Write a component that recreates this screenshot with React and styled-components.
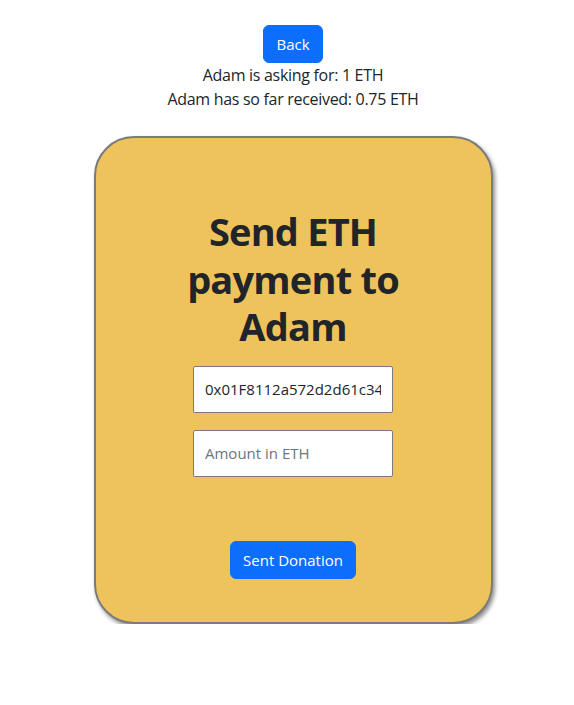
import React from "react";
import styled, { createGlobalStyle } from "styled-components";

const Global = createGlobalStyle`
  html, body { margin: 0; padding: 0; background: #fff; }
  body {
    font-family: "Open Sans", "Noto Sans", "Liberation Sans", sans-serif;
    font-size: 16px;
    line-height: 1.5;
    color: #212529;
  }
  * { box-sizing: border-box; }
`;

const Page = styled.div`
  display: flex;
  flex-direction: column;
  align-items: center;
  text-align: center;
  padding: 25px 0 0 12px;
`;

const Button = styled.button`
  font-family: inherit;
  font-size: 15px;
  line-height: 24px;
  padding: 6px 12px;
  color: #fff;
  background: #0d6efd;
  border: 1px solid #0d6efd;
  border-radius: 6px;
  cursor: pointer;
  margin-top: ${(p) => p.$mt || 0}px;
`;

const Info = styled.p`
  margin: 0;
  font-size: 16px;
  line-height: 24px;
  letter-spacing: -0.3px;
`;

const Card = styled.div`
  margin-top: 25px;
  width: 399px;
  height: 488px;
  background: #efc35b;
  border: 2px solid #7b7b7b;
  border-radius: 40px;
  box-shadow: 2px 3px 4px rgba(0, 0, 0, 0.45);
  display: flex;
  flex-direction: column;
  align-items: center;
  padding-top: 70px;
`;

const Title = styled.h1`
  margin: 0;
  font-size: 38px;
  line-height: 47.5px;
  font-weight: 700;
  letter-spacing: -0.8px;
`;

const Field = styled.input`
  width: 200px;
  height: 47px;
  margin-top: ${(p) => p.$mt}px;
  padding: 0 11px;
  font-family: inherit;
  font-size: 15px;
  color: #212529;
  background: #fff;
  border: 1px solid #7a7a7a;
  border-radius: 2px;
  outline: none;
  &::placeholder { color: #6c757d; }
`;

export default function App() {
  return (
    <>
      <Global />
      <Page>
        <Button>Back</Button>
        <Info>Adam is asking for: 1 ETH</Info>
        <Info>Adam has so far received: 0.75 ETH</Info>
        <Card>
          <Title>
            Send ETH
            <br />
            payment to
            <br />
            Adam
          </Title>
          <Field $mt={15} readOnly value="0x01F8112a572d2d61c3459b0aE1b2f3C4d5e6F7a8" />
          <Field $mt={17} placeholder="Amount in ETH" />
          <Button $mt={64}>Sent Donation</Button>
        </Card>
      </Page>
    </>
  );
}
